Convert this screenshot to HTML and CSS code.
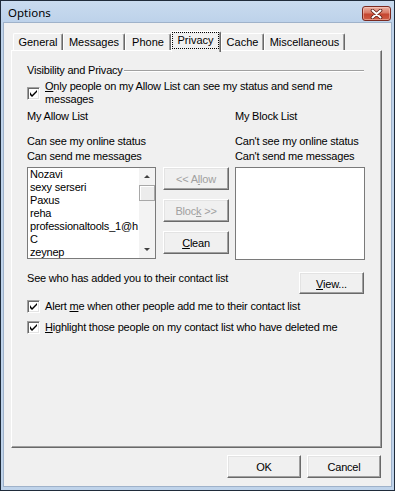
FILE: index.html
```html
<!DOCTYPE html>
<html>
<head>
<meta charset="utf-8">
<title>Options</title>
<link rel="stylesheet" href="styles.css">
</head>
<body>
<div class="window">
  <div class="titlebar">
    <span class="title">Options</span>
    <div class="close">
      <svg width="13" height="10" viewBox="0 0 13 10">
        <path d="M2.5 1.5 L10.5 8.5 M10.5 1.5 L2.5 8.5" stroke="#5a1d14" stroke-width="3.6" stroke-linecap="round"/>
        <path d="M2.5 1.5 L10.5 8.5 M10.5 1.5 L2.5 8.5" stroke="#ffffff" stroke-width="2" stroke-linecap="round"/>
      </svg>
    </div>
  </div>
  <div class="client">
    <div class="tabs">
      <div class="tab w-general">General</div>
      <div class="tab w-messages">Messages</div>
      <div class="tab w-phone">Phone</div>
      <div class="tab tab-active w-privacy"><span class="focus">Privacy</span></div>
      <div class="tab w-cache">Cache</div>
      <div class="tab w-misc">Miscellaneous</div>
    </div>
    <div class="panel">
      <div class="group-head">
        <span>Visibility and Privacy</span>
        <span class="etch"></span>
      </div>
      <div class="check-row first">
        <span class="cb checked"><svg width="7" height="7" viewBox="0 0 7 7"><path d="M0 2 L0 5 L2 7 L7 2 L7 0 L2 5 Z" fill="#000"/></svg></span>
        <span class="cb-label"><u>O</u>nly people on my Allow List can see my status and send me<br>messages</span>
      </div>
      <div class="lists">
        <div class="col col-left">
          <div class="col-head">My Allow List</div>
          <div class="col-sub">Can see my online status<br>Can send me messages</div>
          <div class="listbox allow">
            <div class="items">
              <div>Nozavi</div>
              <div>sexy serseri</div>
              <div>Paxus</div>
              <div>reha</div>
              <div>professionaltools_1@h</div>
              <div>C</div>
              <div>zeynep</div>
            </div>
            <div class="scrollbar">
              <div class="arrow up"><span class="tri-up"></span></div>
              <div class="thumb"></div>
              <div class="track"></div>
              <div class="arrow down"><span class="tri-down"></span></div>
            </div>
          </div>
        </div>
        <div class="col col-mid">
          <div class="btn mid disabled"><span>&lt;&lt; A<u>l</u>low</span></div>
          <div class="btn mid disabled"><span>Bloc<u>k</u> &gt;&gt;</span></div>
          <div class="btn mid"><span><u>C</u>lean</span></div>
        </div>
        <div class="col col-right">
          <div class="col-head">My Block List</div>
          <div class="col-sub">Can't see my online status<br>Can't send me messages</div>
          <div class="listbox block"></div>
        </div>
      </div>
      <div class="view-row">
        <span>See who has added you to their contact list</span>
        <div class="btn view"><span><u>V</u>iew...</span></div>
      </div>
      <div class="check-row second">
        <span class="cb checked"><svg width="7" height="7" viewBox="0 0 7 7"><path d="M0 2 L0 5 L2 7 L7 2 L7 0 L2 5 Z" fill="#000"/></svg></span>
        <span class="cb-label">Alert <u>m</u>e when other people add me to their contact list</span>
      </div>
      <div class="check-row third">
        <span class="cb checked"><svg width="7" height="7" viewBox="0 0 7 7"><path d="M0 2 L0 5 L2 7 L7 2 L7 0 L2 5 Z" fill="#000"/></svg></span>
        <span class="cb-label"><u>H</u>ighlight those people on my contact list who have deleted me</span>
      </div>
    </div>
    <div class="footer">
      <div class="btn dlg"><span>OK</span></div>
      <div class="btn dlg"><span>Cancel</span></div>
    </div>
  </div>
</div>
</body>
</html>
```
FILE: styles.css
```css
* { box-sizing: border-box; }

html, body {
  margin: 0;
  padding: 0;
}

body {
  width: 395px;
  height: 491px;
  overflow: hidden;
  font-family: "Liberation Sans", Arial, sans-serif;
  font-size: 11px;
  letter-spacing: -0.2px;
  color: #000;
  background: #bcd1ea;
}

.window {
  width: 395px;
  height: 491px;
  border: 1px solid #1f2b3a;
  background: #bfd3ea;
  padding: 0 2px 3px 2px;
  display: flex;
  flex-direction: column;
}

.titlebar {
  height: 21px;
  flex: none;
  margin: 0 -2px;
  padding: 0 3px 0 7px;
  display: flex;
  justify-content: space-between;
  align-items: flex-start;
  background: linear-gradient(#c9dbef, #bdd2ea);
}

.title {
  font-family: "Noto Sans", "Open Sans", sans-serif;
  font-size: 11.5px;
  letter-spacing: 0;
  line-height: 14px;
  margin-top: 5px;
  color: #000;
}

.close {
  width: 29px;
  height: 15px;
  margin-top: 5px;
  border: 1px solid #7b2a20;
  border-radius: 3px;
  background: linear-gradient(#eab0a2 0%, #d97a66 45%, #c54630 55%, #cf5d45 100%);
  box-shadow: inset 0 0 0 1px rgba(255, 220, 210, 0.45);
  display: flex;
  align-items: center;
  justify-content: center;
}

.close svg { display: block; }

.client {
  flex: 1;
  border: 1px solid #9fb2ca;
  background: #f0f0f0;
  padding-top: 8px;
  display: flex;
  flex-direction: column;
}

/* Tabs */
.tabs {
  height: 19px;
  margin-left: 9px;
  display: flex;
  align-items: flex-end;
  position: relative;
  z-index: 2;
}

.tab {
  height: 17px;
  border-top: 1px solid #fff;
  border-left: 1px solid #fff;
  border-right: 1px solid #696969;
  box-shadow: inset -1px 0 #a0a0a0;
  border-radius: 2px 2px 0 0;
  text-align: center;
  line-height: 15px;
  padding-top: 1px;
  background: #f0f0f0;
  letter-spacing: 0;
}

.w-general { width: 50px; }
.w-messages { width: 62px; }
.w-phone { width: 46px; }
.w-privacy { width: 50px; }
.w-cache { width: 43px; }
.w-misc { width: 81px; }

.tab-active {
  height: 21px;
  margin-bottom: -2px;
  padding: 0 1px 0 0;
}

.focus {
  display: block;
  height: 17px;
  border: 1px dotted #000;
  line-height: 13px;
  padding-top: 1px;
}

/* Panel */
.panel {
  width: 371px;
  height: 398px;
  margin-left: 7px;
  border-top: 1px solid #fff;
  border-left: 1px solid #fff;
  border-right: 1px solid #696969;
  border-bottom: 1px solid #696969;
  box-shadow: inset -1px -1px #a0a0a0;
  padding: 13px 16px 0 15px;
  position: relative;
  z-index: 1;
}

.group-head {
  display: flex;
  align-items: center;
  height: 13px;
  line-height: 13px;
  white-space: nowrap;
}

.etch {
  flex: 1;
  margin-left: 1px;
  margin-right: 1px;
  border-top: 1px solid #a0a0a0;
  border-bottom: 1px solid #fff;
}

.check-row {
  display: flex;
  align-items: center;
  line-height: 13px;
  white-space: nowrap;
}

.check-row.first { margin-top: 3px; }
.check-row.second { margin-top: 6px; }
.check-row.third { margin-top: 8px; }

.cb {
  flex: none;
  width: 13px;
  height: 13px;
  background: #fff;
  border-top: 1px solid #a0a0a0;
  border-left: 1px solid #a0a0a0;
  border-right: 1px solid #fff;
  border-bottom: 1px solid #fff;
  box-shadow: inset 1px 1px #696969, inset -1px -1px #e3e3e3;
  display: flex;
  align-items: center;
  justify-content: center;
}

.cb svg { display: block; }

.cb-label { margin-left: 5px; }

/* Lists */
.lists {
  display: flex;
  margin-top: 4px;
}

.col { display: flex; flex-direction: column; }

.col-left { width: 129px; }
.col-mid { width: 66px; margin-left: 7px; padding-top: 57px; gap: 9px; }
.col-right { width: 130px; margin-left: 6px; }

.col-head {
  line-height: 13px;
  height: 13px;
  white-space: nowrap;
}

.col-sub {
  margin-top: 11px;
  line-height: 15px;
  white-space: nowrap;
}

.listbox {
  margin-top: 3px;
  background: #fff;
  border: 1px solid #7a7a7a;
  display: flex;
}

.listbox.allow { height: 92px; }
.listbox.block { height: 93px; }

.items {
  flex: 1;
  min-width: 0;
  overflow: hidden;
  padding-left: 2px;
  line-height: 13px;
  white-space: nowrap;
}

.scrollbar {
  width: 16px;
  flex: none;
  display: flex;
  flex-direction: column;
  background: #f3f3f3;
}

.arrow {
  height: 17px;
  display: flex;
  align-items: center;
  justify-content: center;
  background: #f3f3f3;
}

.tri-up {
  width: 0;
  height: 0;
  border-left: 3px solid transparent;
  border-right: 3px solid transparent;
  border-bottom: 3px solid #404040;
}

.tri-down {
  width: 0;
  height: 0;
  border-left: 3px solid transparent;
  border-right: 3px solid transparent;
  border-top: 3px solid #404040;
}

.thumb {
  height: 16px;
  background: #ececec;
  border: 1px solid #a8a8a8;
  box-shadow: inset 1px 1px #fff;
}

.track { flex: 1; }

/* Buttons */
.btn {
  background: #f0f0f0;
  border-top: 1px solid #fff;
  border-left: 1px solid #fff;
  border-right: 1px solid #696969;
  border-bottom: 1px solid #696969;
  box-shadow: inset -1px -1px #a0a0a0, inset 1px 1px #e3e3e3;
  display: flex;
  align-items: center;
  justify-content: center;
  white-space: nowrap;
}

.btn.mid { height: 23px; }
.btn.disabled { color: #a0a0a0; }

.view-row {
  margin-top: 12px;
  display: flex;
  justify-content: space-between;
  align-items: flex-start;
  line-height: 13px;
  white-space: nowrap;
}

.btn.view {
  width: 65px;
  height: 22px;
  margin-right: 1px;
  padding-top: 2px;
}

.footer {
  margin-top: 7px;
  padding-right: 10px;
  display: flex;
  justify-content: flex-end;
  gap: 6px;
}

.btn.dlg {
  width: 74px;
  height: 23px;
}
```
